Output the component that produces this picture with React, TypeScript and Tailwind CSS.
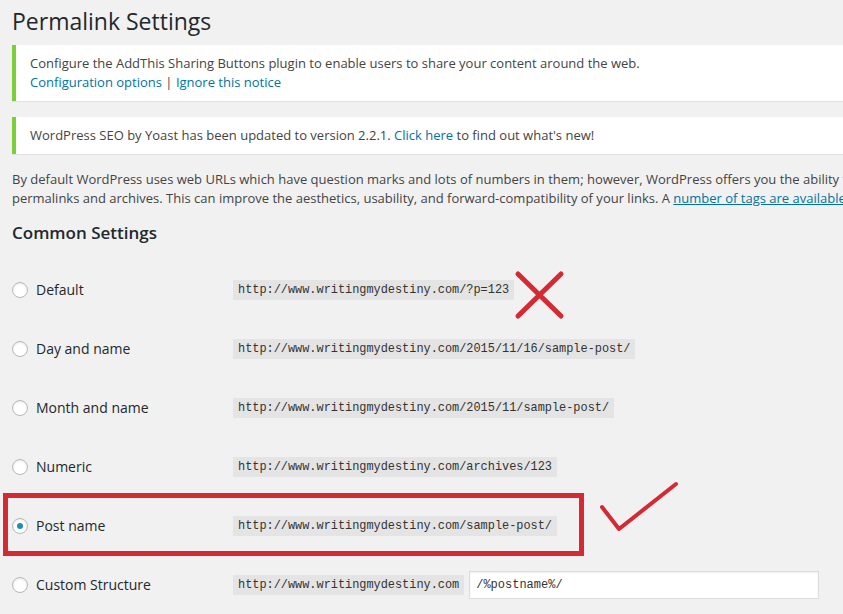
import { ReactNode } from 'react'

type Row = {
  label: string
  url: string
  checked?: boolean
  custom?: boolean
}

const rows: Row[] = [
  { label: 'Default', url: 'http://www.writingmydestiny.com/?p=123' },
  { label: 'Day and name', url: 'http://www.writingmydestiny.com/2015/11/16/sample-post/' },
  { label: 'Month and name', url: 'http://www.writingmydestiny.com/2015/11/sample-post/' },
  { label: 'Numeric', url: 'http://www.writingmydestiny.com/archives/123' },
  { label: 'Post name', url: 'http://www.writingmydestiny.com/sample-post/', checked: true },
  { label: 'Custom Structure', url: 'http://www.writingmydestiny.com', custom: true }
]

const Notice = ({ children }: { children: ReactNode }) => (
  <div className="border-l-4 border-[#7ad03a] bg-white py-[9px] pl-[14px] pr-3 text-[13px] leading-[19px] text-[#444] shadow-[0_1px_1px_rgba(0,0,0,0.06)]">
    {children}
  </div>
)

const Radio = ({ checked }: { checked?: boolean }) => (
  <span className="flex h-4 w-4 shrink-0 items-center justify-center rounded-full border border-[#b4b9be] bg-white shadow-[inset_0_1px_2px_rgba(0,0,0,0.1)]">
    {checked && <span className="h-[6px] w-[6px] rounded-full bg-[#1e8cbe]" />}
  </span>
)

const Code = ({ children }: { children: ReactNode }) => (
  <code className="inline-block bg-[#e4e4e4] px-[5px] pb-[2px] pt-[3px] font-['Liberation_Mono',monospace] text-[11.9px] leading-[15px] text-[#333]">
    {children}
  </code>
)

export default function App() {
  return (
    <div className="relative h-[614px] w-[843px] overflow-hidden bg-[#f1f1f1] font-['Open_Sans',sans-serif]">
      <div className="w-[1100px] pl-3">
        <h1 className="pt-[7px] text-[23px] font-normal leading-[29px] text-[#23282d]">
          Permalink Settings
        </h1>

        <div className="mt-[9px] flex flex-col gap-4">
          <Notice>
            Configure the AddThis Sharing Buttons plugin to enable users to share your content around the web.
            <br />
            <a className="text-[#0074a2]">Configuration options</a> |{' '}
            <a className="text-[#0074a2]">Ignore this notice</a>
          </Notice>
          <Notice>
            WordPress SEO by Yoast has been updated to version 2.2.1.{' '}
            <a className="text-[#0074a2]">Click here</a> to find out what's new!
          </Notice>
        </div>

        <p className="mt-4 whitespace-nowrap text-[13px] leading-[19px] text-[#444]">
          By default WordPress uses web URLs which have question marks and lots of numbers in them; however, WordPress offers you the ability to create a custom URL structure for your
          <br />
          permalinks and archives. This can improve the aesthetics, usability, and forward-compatibility of your links. A{' '}
          <a className="text-[#0074a2] underline">number of tags are available</a>, and here are some examples to get you started.
        </p>

        <h3 className="mt-[14px] text-[17px] font-semibold leading-[22px] text-[#23282d]">
          Common Settings
        </h3>

        <div className="mt-4 flex flex-col">
          {rows.map((row) => (
            <div key={row.label} className="flex h-[59px] items-center">
              <div className="flex w-[221px] items-center gap-2">
                <Radio checked={row.checked} />
                <span className="text-[14px] leading-5 text-[#23282d]">{row.label}</span>
              </div>
              <Code>{row.url}</Code>
              {row.custom && (
                <div className="ml-[5px] flex h-[28px] w-[350px] items-center border border-[#ddd] bg-white pl-[6px] font-['Liberation_Mono',monospace] text-[12px] text-[#333] shadow-[inset_0_1px_2px_rgba(0,0,0,0.07)]">
                  /%postname%/
                </div>
              )}
            </div>
          ))}
        </div>
      </div>

      {/* red annotations drawn over the screenshot */}
      <svg className="absolute left-[512px] top-[268px]" width="56" height="55" viewBox="0 0 56 55">
        <path d="M6 6 L49 48 M49 6 L6 48" stroke="#d42a33" strokeWidth="5" strokeLinecap="round" fill="none" />
      </svg>
      <div className="absolute left-[3px] top-[493px] h-[63px] w-[581px] border-[5px] border-[#d42a33]" />
      <svg className="absolute left-[596px] top-[478px]" width="86" height="58" viewBox="0 0 86 58">
        <path d="M6 29 L23 51 L80 6" stroke="#d42a33" strokeWidth="4" strokeLinecap="round" strokeLinejoin="round" fill="none" />
      </svg>
    </div>
  )
}
